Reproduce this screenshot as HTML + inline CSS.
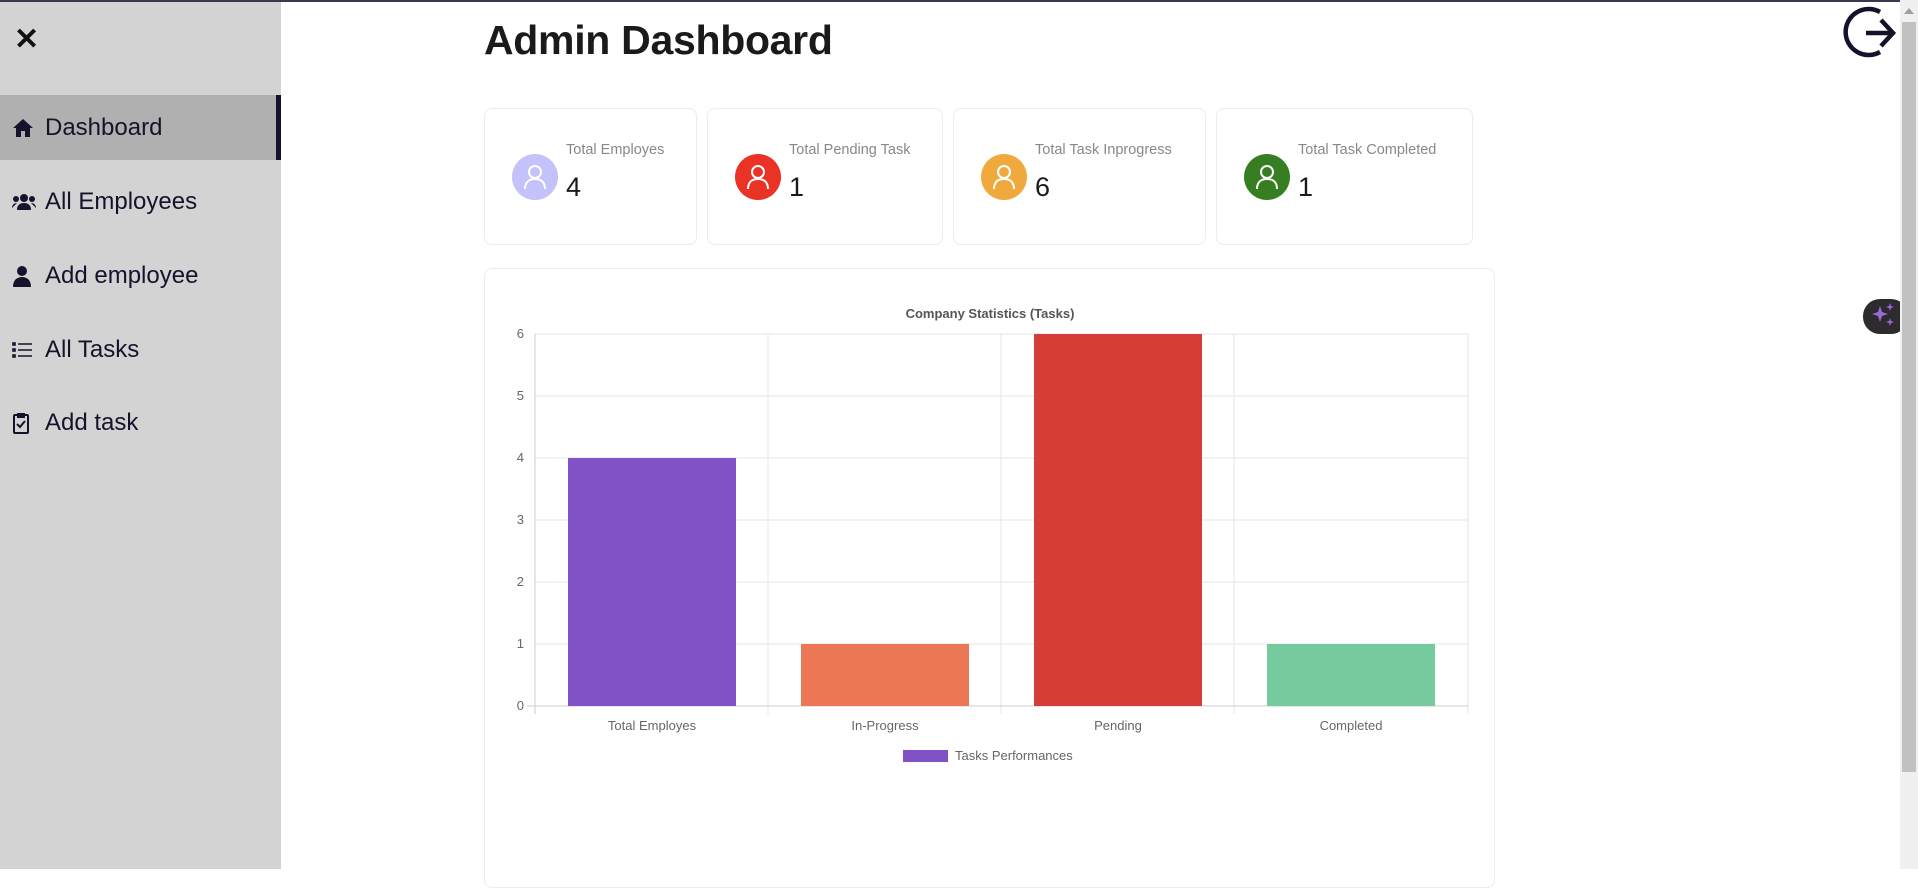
<!DOCTYPE html>
<html><head><meta charset="utf-8"><style>
*{margin:0;padding:0;box-sizing:border-box}
body{width:1918px;height:869px;overflow:hidden;background:#fff;font-family:"Liberation Sans",sans-serif;position:relative}
.topline{position:absolute;left:0;top:0;width:1918px;height:2px;background:#3a3850}
.side{position:absolute;left:0;top:2px;width:281px;height:867px;background:#d3d3d3}
.x{position:absolute;left:14px;top:20px;font-size:30px;font-weight:bold;color:#111}
.item{position:absolute;left:0;width:281px;height:65px;display:flex;align-items:center;font-size:24px;color:#15132b}
.item svg{position:absolute;left:12px}
.item span{position:absolute;left:45px}
.active{background:#b0b0b0;border-right:5px solid #15132b}
h1{position:absolute;left:484px;top:17px;font-size:41px;font-weight:bold;color:#1a1a1a;letter-spacing:-0.3px}
.card{position:absolute;top:108px;height:137px;border:1px solid #ececec;border-radius:8px;background:#fff}
.circ{position:absolute;left:27px;top:45px;width:46px;height:46px;border-radius:50%}
.circ svg{position:absolute;left:11px;top:10px}
.lbl{position:absolute;left:81px;top:33px;font-size:14.5px;color:#888}
.num{position:absolute;left:81px;top:63px;font-size:27px;color:#1a1a1a}
.chart{position:absolute;left:484px;top:268px;width:1011px;height:620px;border:1px solid #ececec;border-radius:8px}
.sb{position:absolute;left:1900px;top:0;width:18px;height:869px;background:#f0f0f0}
.thumb{position:absolute;left:2px;top:22px;width:14px;height:750px;background:#c1c1c1}
</style></head><body>
<div class="topline"></div>
<div class="side">
<div class="x">✕</div>
<div class="item active" style="top:93px"><svg width="22" height="20" viewBox="0 0 22 20"><path d="M11 1L1 10h3v9h5v-6h4v6h5v-9h3z" fill="#15132b"/></svg><span>Dashboard</span></div>
<div class="item" style="top:167px"><svg width="24" height="18" viewBox="0 0 24 18"><circle cx="12" cy="5" r="4" fill="#15132b"/><circle cx="4" cy="6" r="3" fill="#15132b"/><circle cx="20" cy="6" r="3" fill="#15132b"/><path d="M5 17c0-5 3-7 7-7s7 2 7 7z M0 15c0-3 2-5 5-5 M24 15c0-3-2-5-5-5" fill="#15132b"/></svg><span>All Employees</span></div>
<div class="item" style="top:241px"><svg width="20" height="22" viewBox="0 0 20 22"><circle cx="10" cy="6" r="5" fill="#15132b"/><path d="M1 22c0-7 4-10 9-10s9 3 9 10z" fill="#15132b"/></svg><span>Add employee</span></div>
<div class="item" style="top:315px"><svg width="20" height="16" viewBox="0 0 20 16"><g fill="none" stroke="#15132b" stroke-width="1.6"><rect x="1" y="1" width="2" height="2"/><rect x="1" y="7" width="2" height="2"/><rect x="1" y="13" width="2" height="2"/><path d="M6 2h14M6 8h14M6 14h14"/></g></svg><span>All Tasks</span></div>
<div class="item" style="top:388px"><svg width="18" height="22" viewBox="0 0 18 22"><g fill="none" stroke="#15132b" stroke-width="2"><rect x="2" y="3" width="14" height="18" rx="1"/><path d="M6 2h6v3H6z M5 12l3 3 5-6"/></g></svg><span>Add task</span></div>
</div>
<h1>Admin Dashboard</h1>
<div class="card" style="left:484px;width:213px"><div class="circ" style="background:#c3c2fb"><svg width="24" height="26" viewBox="0 0 24 26"><g fill="none" stroke="#fff" stroke-width="2"><circle cx="12" cy="8" r="6"/><path d="M2 25c0-7 4-10 10-10s10 3 10 10"/></g></svg></div><div class="lbl">Total Employes</div><div class="num">4</div></div>
<div class="card" style="left:707px;width:236px"><div class="circ" style="background:#ea3326"><svg width="24" height="26" viewBox="0 0 24 26"><g fill="none" stroke="#fff" stroke-width="2"><circle cx="12" cy="8" r="6"/><path d="M2 25c0-7 4-10 10-10s10 3 10 10"/></g></svg></div><div class="lbl">Total Pending Task</div><div class="num">1</div></div>
<div class="card" style="left:953px;width:253px"><div class="circ" style="background:#f0a93c"><svg width="24" height="26" viewBox="0 0 24 26"><g fill="none" stroke="#fff" stroke-width="2"><circle cx="12" cy="8" r="6"/><path d="M2 25c0-7 4-10 10-10s10 3 10 10"/></g></svg></div><div class="lbl">Total Task Inprogress</div><div class="num">6</div></div>
<div class="card" style="left:1216px;width:257px"><div class="circ" style="background:#377d22"><svg width="24" height="26" viewBox="0 0 24 26"><g fill="none" stroke="#fff" stroke-width="2"><circle cx="12" cy="8" r="6"/><path d="M2 25c0-7 4-10 10-10s10 3 10 10"/></g></svg></div><div class="lbl">Total Task Completed</div><div class="num">1</div></div>
<div class="chart"></div>
<svg style="position:absolute;left:0;top:0" width="1918" height="869" font-family="Liberation Sans, sans-serif">
<text x="990" y="318" font-size="13" font-weight="bold" fill="#555" text-anchor="middle">Company Statistics (Tasks)</text>
<g stroke="#e6e6e6" stroke-width="1">
<line x1="535" y1="334" x2="1468" y2="334"/><line x1="535" y1="396" x2="1468" y2="396"/><line x1="535" y1="458" x2="1468" y2="458"/><line x1="535" y1="520" x2="1468" y2="520"/><line x1="535" y1="582" x2="1468" y2="582"/><line x1="535" y1="644" x2="1468" y2="644"/>
<line x1="768" y1="334" x2="768" y2="714"/><line x1="1001" y1="334" x2="1001" y2="714"/><line x1="1234" y1="334" x2="1234" y2="714"/><line x1="1468" y1="334" x2="1468" y2="714"/>
</g>
<line x1="535" y1="334" x2="535" y2="714" stroke="#ccc"/><line x1="527" y1="706" x2="1468" y2="706" stroke="#ccc"/>
<rect x="568" y="458" width="168" height="248" fill="#8052c6"/>
<rect x="801" y="644" width="168" height="62" fill="#ec7754"/>
<rect x="1034" y="334" width="168" height="372" fill="#d63e35"/>
<rect x="1267" y="644" width="168" height="62" fill="#75cb9e"/>
<g font-size="13" fill="#666" text-anchor="end"><text x="524" y="338">6</text><text x="524" y="400">5</text><text x="524" y="462">4</text><text x="524" y="524">3</text><text x="524" y="586">2</text><text x="524" y="648">1</text><text x="524" y="710">0</text></g>
<g font-size="13" fill="#666" text-anchor="middle"><text x="652" y="730">Total Employes</text><text x="885" y="730">In-Progress</text><text x="1118" y="730">Pending</text><text x="1351" y="730">Completed</text></g>
<rect x="903" y="750" width="45" height="12" fill="#8052c6"/>
<text x="955" y="760" font-size="13" fill="#666">Tasks Performances</text>
<g fill="none" stroke="#15132b" stroke-width="4.5"><path d="M1880 12A23 23 0 1 0 1880 52"/><path d="M1866 33h27M1881 20l12 13-12 13"/></g>
<rect x="1863" y="299" width="45" height="35" rx="17" fill="#2d2b2e"/>
<path d="M1880 306l2 6 6 2-6 2-2 6-2-6-6-2 6-2z M1890 303l1 3 3 1-3 1-1 3-1-3-3-1 3-1z M1890 318l1 3 3 1-3 1-1 3-1-3-3-1 3-1z" fill="#9a6ad8"/>
</svg>
<div class="sb"><div class="thumb"></div><svg style="position:absolute;left:4px;top:8px" width="10" height="6"><path d="M0 6L5 0 10 6z" fill="#a0a0a0"/></svg></div>
</body></html>
